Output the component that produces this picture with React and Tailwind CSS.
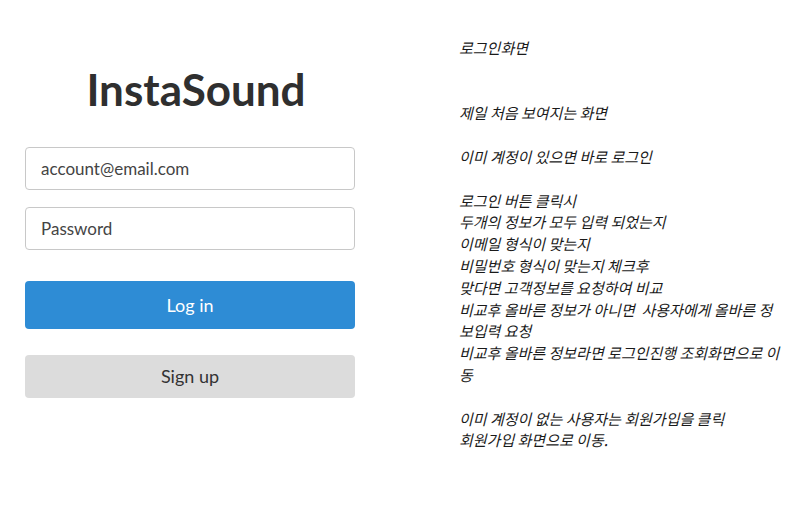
export default function App() {
  const notes = `로그인화면


제일 처음 보여지는 화면

이미 계정이 있으면 바로 로그인

로그인 버튼 클릭시
두개의 정보가 모두 입력 되었는지
이메일 형식이 맞는지
비밀번호 형식이 맞는지 체크후
맞다면 고객정보를 요청하여 비교
비교후 올바른 정보가 아니면  사용자에게 올바른 정보입력 요청
비교후 올바른 정보라면 로그인진행 조회화면으로 이동

이미 계정이 없는 사용자는 회원가입을 클릭
회원가입 화면으로 이동.`;

  return (
    <div className="flex min-h-screen w-[810px] bg-white">
      <div className="w-[380px] shrink-0 px-[25px] pt-[65px] font-['Lato','Open_Sans',sans-serif] text-[#333]">
        <h1 className="mb-[34px] h-[48px] pl-[12px] text-center text-[44px] font-bold leading-[48px] text-[#2f2f2f]">
          InstaSound
        </h1>
        <input
          className="block h-[43px] w-[330px] rounded-[4px] border border-[#c8c8c8] px-[15px] text-[17px] text-[#333] placeholder:text-[#444] outline-none"
          placeholder="account@email.com"
        />
        <input
          type="password"
          className="mt-[17px] block h-[43px] w-[330px] rounded-[4px] border border-[#c8c8c8] px-[15px] text-[17px] text-[#333] placeholder:text-[#444] outline-none"
          placeholder="Password"
        />
        <button className="mt-[31px] block h-[48px] w-[330px] rounded-[4px] bg-[#2e8cd5] text-[18px] text-white">
          Log in
        </button>
        <button className="mt-[26px] block h-[43px] w-[330px] rounded-[4px] bg-[#dcdcdc] text-[18px] text-[#333]">
          Sign up
        </button>
      </div>
      <div className="pl-[79px] pt-[37px]">
        <p className="w-[322px] whitespace-pre-wrap break-all text-[15px] italic leading-[21.8px] text-[#1a1a1a] font-['Noto_Sans_CJK_KR','Noto_Sans',sans-serif]">
          {notes}
        </p>
      </div>
    </div>
  );
}
